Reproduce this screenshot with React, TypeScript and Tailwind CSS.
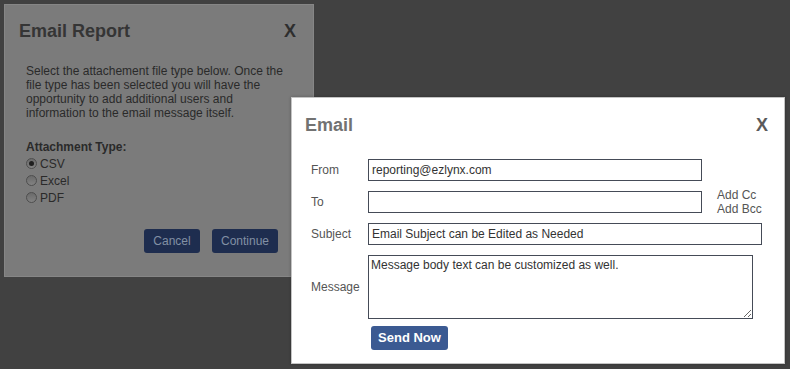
import React from "react";

function Radio({ checked }: { checked?: boolean }) {
  return (
    <span className="relative mt-[2px] flex h-[11px] w-[11px] shrink-0 items-center justify-center rounded-full border border-[#4e4e4e] bg-gradient-to-b from-[#6a6a6a] to-[#828282]">
      {checked ? <span className="h-[5px] w-[5px] rounded-full bg-[#1f1f1f]" /> : null}
    </span>
  );
}

export default function App() {
  return (
    <div
      className="relative h-[369px] w-[790px] overflow-hidden bg-[#414141]"
      style={{ fontFamily: '"Liberation Sans", Arial, sans-serif' }}
    >
      {/* Background (dimmed) dialog */}
      <div className="absolute left-[4px] top-[4px] flex h-[273px] w-[310px] flex-col border border-[#868686] bg-[#7b7b7b]">
        <div className="flex items-center justify-between pl-[14px] pr-[17px] pt-[14px]">
          <span className="text-[18px] font-bold leading-[24px] text-[#353535]">Email Report</span>
          <span className="text-[18px] font-bold leading-[24px] text-[#2e2e2e]">X</span>
        </div>
        <p className="mt-[21px] pl-[21px] text-[12px] leading-[14px] text-[#2a2a2a]">
          Select the attachement file type below. Once the
          <br />
          file type has been selected you will have the
          <br />
          opportunity to add additional users and
          <br />
          information to the email message itself.
        </p>
        <div className="mt-[20px] pl-[21px] text-[12px] font-bold leading-[14px] text-[#2a2a2a]">
          Attachment Type:
        </div>
        <div className="mt-[2px] flex flex-col pl-[21px] text-[12px] leading-[17px] text-[#2a2a2a]">
          <label className="flex items-start gap-[3px]">
            <Radio checked />
            <span>CSV</span>
          </label>
          <label className="flex items-start gap-[3px]">
            <Radio />
            <span>Excel</span>
          </label>
          <label className="flex items-start gap-[3px]">
            <Radio />
            <span>PDF</span>
          </label>
        </div>
        <div className="mt-[22px] flex justify-end gap-[12px] pr-[35px]">
          <button className="h-[24px] w-[56px] rounded-[3px] bg-[#1e2d4f] text-[12px] text-[#8290a4]">
            Cancel
          </button>
          <button className="h-[24px] w-[66px] rounded-[3px] bg-[#1e2d4f] text-[12px] text-[#8290a4]">
            Continue
          </button>
        </div>
      </div>

      {/* Foreground Email dialog */}
      <div className="absolute left-[291px] top-[97px] flex h-[267px] w-[494px] flex-col border border-[#c4c4c4] bg-white shadow-[0_0_3px_rgba(0,0,0,0.25)]">
        <div className="flex items-center justify-between pl-[13px] pr-[16px] pt-[15px]">
          <span className="text-[18px] font-bold leading-[24px] text-[#727272]">Email</span>
          <span className="text-[18px] font-bold leading-[24px] text-[#5a5a5a]">X</span>
        </div>

        <div className="mt-[22px] flex flex-col gap-[10px] pl-[19px] text-[12px] text-[#555]">
          <div className="flex h-[22px] items-center">
            <span className="w-[57px] shrink-0">From</span>
            <div className="flex h-[22px] w-[334px] items-center border border-[#454b57] pl-[3px] text-[#333]">
              reporting@ezlynx.com
            </div>
          </div>
          <div className="flex h-[22px] items-center">
            <span className="w-[57px] shrink-0">To</span>
            <div className="h-[22px] w-[334px] shrink-0 border border-[#454b57]" />
            <div className="ml-[15px] flex shrink-0 flex-col leading-[14px]">
              <span>Add Cc</span>
              <span>Add Bcc</span>
            </div>
          </div>
          <div className="flex h-[22px] items-center">
            <span className="w-[57px] shrink-0">Subject</span>
            <div className="flex h-[22px] w-[394px] items-center border border-[#454b57] pl-[3px] text-[#333]">
              Email Subject can be Edited as Needed
            </div>
          </div>
          <div className="flex h-[64px] items-center">
            <span className="w-[57px] shrink-0">Message</span>
            <textarea
              readOnly
              defaultValue="Message body text can be customized as well."
              className="block h-[64px] w-[385px] border border-[#454b57] px-[2px] pt-[2px] text-[12px] leading-[14px] text-[#333] outline-none"
            />
          </div>
        </div>
        <div className="mt-[6px] pl-[79px]">
          <button className="h-[24px] w-[77px] rounded-[3px] bg-[#3b5a92] text-[13px] font-bold text-white">
            Send Now
          </button>
        </div>
      </div>
    </div>
  );
}
